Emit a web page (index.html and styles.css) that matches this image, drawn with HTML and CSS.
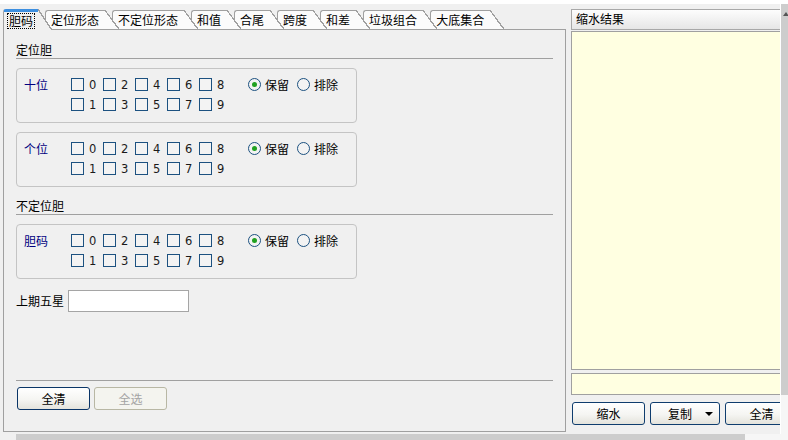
FILE: index.html
```html
<!DOCTYPE html>
<html>
<head>
<meta charset="utf-8">
<link rel="stylesheet" href="styles.css">
</head>
<body>
<div class="window">
  <div class="main">
    <div class="tabctl">
      <div class="tabs">
        <div class="tab active"><span class="focus">胆码</span></div>
        <div class="tab">定位形态</div>
        <div class="tab">不定位形态</div>
        <div class="tab">和值</div>
        <div class="tab">合尾</div>
        <div class="tab">跨度</div>
        <div class="tab">和差</div>
        <div class="tab">垃圾组合</div>
        <div class="tab">大底集合</div>
      </div>
      <div class="panel">
        <div class="section-title">定位胆</div>
        <div class="group">
          <div class="group-label">十位</div>
          <div class="digits">
            <label class="chk"><span class="box"></span>0</label>
            <label class="chk"><span class="box"></span>2</label>
            <label class="chk"><span class="box"></span>4</label>
            <label class="chk"><span class="box"></span>6</label>
            <label class="chk"><span class="box"></span>8</label>
            <label class="chk"><span class="box"></span>1</label>
            <label class="chk"><span class="box"></span>3</label>
            <label class="chk"><span class="box"></span>5</label>
            <label class="chk"><span class="box"></span>7</label>
            <label class="chk"><span class="box"></span>9</label>
          </div>
          <div class="radios">
            <label class="radio"><span class="dot on"></span>保留</label>
            <label class="radio"><span class="dot"></span>排除</label>
          </div>
        </div>
        <div class="group">
          <div class="group-label">个位</div>
          <div class="digits">
            <label class="chk"><span class="box"></span>0</label>
            <label class="chk"><span class="box"></span>2</label>
            <label class="chk"><span class="box"></span>4</label>
            <label class="chk"><span class="box"></span>6</label>
            <label class="chk"><span class="box"></span>8</label>
            <label class="chk"><span class="box"></span>1</label>
            <label class="chk"><span class="box"></span>3</label>
            <label class="chk"><span class="box"></span>5</label>
            <label class="chk"><span class="box"></span>7</label>
            <label class="chk"><span class="box"></span>9</label>
          </div>
          <div class="radios">
            <label class="radio"><span class="dot on"></span>保留</label>
            <label class="radio"><span class="dot"></span>排除</label>
          </div>
        </div>
        <div class="section-title second">不定位胆</div>
        <div class="group">
          <div class="group-label">胆码</div>
          <div class="digits">
            <label class="chk"><span class="box"></span>0</label>
            <label class="chk"><span class="box"></span>2</label>
            <label class="chk"><span class="box"></span>4</label>
            <label class="chk"><span class="box"></span>6</label>
            <label class="chk"><span class="box"></span>8</label>
            <label class="chk"><span class="box"></span>1</label>
            <label class="chk"><span class="box"></span>3</label>
            <label class="chk"><span class="box"></span>5</label>
            <label class="chk"><span class="box"></span>7</label>
            <label class="chk"><span class="box"></span>9</label>
          </div>
          <div class="radios">
            <label class="radio"><span class="dot on"></span>保留</label>
            <label class="radio"><span class="dot"></span>排除</label>
          </div>
        </div>
        <div class="field-row">
          <span class="field-label">上期五星</span>
          <span class="text-input"></span>
        </div>
        <div class="spacer"></div>
        <div class="bottom-bar">
          <div class="btn focused">全清</div>
          <div class="btn disabled">全选</div>
        </div>
      </div>
    </div>
    <div class="result">
      <div class="result-head">缩水结果</div>
      <div class="result-text"></div>
      <div class="result-input"></div>
      <div class="result-buttons">
        <div class="btn">缩水</div>
        <div class="btn split">复制<span class="caret"></span></div>
        <div class="btn wide">全清</div>
      </div>
    </div>
    <div class="vscroll"></div>
  </div>
  <div class="hscroll"></div>
</div>
</body>
</html>
```
FILE: styles.css
```css
* { box-sizing: border-box; }
html, body { margin: 0; padding: 0; }
body {
  width: 788px;
  height: 440px;
  overflow: hidden;
  background: #f0f0f0;
  font-family: "Noto Sans CJK SC", sans-serif;
  font-size: 12px;
  color: #000;
}
.window {
  display: flex;
  flex-direction: column;
  height: 440px;
  border-top: 4px solid #fff;
}
.main {
  display: flex;
  height: 430px;
  flex-shrink: 0;
}

/* ---------- tab control ---------- */
.tabctl {
  margin-left: 3px;
  width: 563px;
  flex-shrink: 0;
  display: flex;
  flex-direction: column;
  padding-top: 5px;
}
.tabs {
  display: flex;
  align-items: flex-end;
  height: 20px;
  position: relative;
  z-index: 1;
}
.tab {
  position: relative;
  height: 19px;
  line-height: 18px;
  padding: 0 6px 0 5px;
  margin-right: 7px;
  border-left: 1px solid #a0a0a0;
  border-top: 1px solid #a0a0a0;
  border-top-left-radius: 3px;
  background: #fbfbfb;
  white-space: nowrap;
}
.tab::after {
  content: "";
  position: absolute;
  top: -1px;
  left: 100%;
  width: 14px;
  height: 19px;
  z-index: 2;
  background: linear-gradient(to top right, #fbfbfb calc(50% - 0.8px), #a0a0a0 calc(50% - 0.8px), #a0a0a0 calc(50% + 0.5px), transparent calc(50% + 0.5px));
}
.tab.active {
  height: 21px;
  margin-bottom: -1px;
  padding: 0 3px;
  line-height: 17px;
  background: #f0f0f0;
  border-top: 3px solid #3d8fe0;
  border-top-left-radius: 3px;
}
.tab.active::after {
  top: -3px;
  height: 21px;
  background: linear-gradient(to top right, #f0f0f0 calc(50% - 0.8px), #a0a0a0 calc(50% - 0.8px), #a0a0a0 calc(50% + 0.5px), transparent calc(50% + 0.5px));
}
.focus {
  display: inline-block;
  border: 1px dotted #000;
  padding: 0 1px;
  line-height: 14px;
}
.panel {
  height: 403px;
  border: 1px solid #a0a0a0;
  background: #f0f0f0;
  display: flex;
  flex-direction: column;
  padding: 12px 12px 21px 12px;
}
.section-title {
  line-height: 16px;
  height: 17px;
  border-bottom: 1px solid #a0a0a0;
}
.section-title.second { margin-top: 11px; }
.group {
  margin-top: 9px;
  width: 341px;
  height: 55px;
  border: 1px solid #c4c4c4;
  border-radius: 4px;
  display: flex;
  align-items: flex-start;
  padding: 9px 0 0 7px;
}
.group-label {
  width: 47px;
  height: 13px;
  line-height: 13px;
  color: #00007f;
}
.digits {
  display: grid;
  grid-template-columns: repeat(5, 32px);
  row-gap: 7px;
}
.chk {
  display: flex;
  align-items: center;
  height: 13px;
  font-family: "DejaVu Sans", sans-serif;
  font-size: 11.5px;
  color: #1a1a1a;
}
.box {
  width: 13px;
  height: 13px;
  border: 1px solid #1c5180;
  margin-right: 5px;
  background: #f3f3f3;
}
.radios {
  display: flex;
  margin-left: 17px;
  gap: 8px;
}
.radio {
  display: flex;
  align-items: center;
  height: 13px;
  gap: 4px;
}
.dot {
  width: 13px;
  height: 13px;
  border-radius: 50%;
  border: 1.3px solid #1c5180;
  background: #f3f3f3;
  display: flex;
  align-items: center;
  justify-content: center;
}
.dot.on::before {
  content: "";
  width: 5px;
  height: 5px;
  border-radius: 50%;
  background: #21a121;
}
.field-row {
  margin-top: 11px;
  display: flex;
  align-items: center;
  gap: 4px;
}
.field-label { line-height: 16px; }
.text-input {
  width: 121px;
  height: 22px;
  background: #fff;
  border: 1px solid #a5a5a5;
}
.spacer { flex: 1; }
.bottom-bar {
  border-top: 1px solid #a0a0a0;
  padding-top: 6px;
  display: flex;
  gap: 4px;
  padding-left: 1px;
}

/* ---------- buttons ---------- */
.btn {
  width: 73px;
  height: 23px;
  flex-shrink: 0;
  border: 1px solid #0f3d6e;
  border-radius: 3px;
  background: linear-gradient(#ffffff, #f5f5f2 55%, #e4e3dc);
  display: flex;
  align-items: center;
  justify-content: center;
  line-height: 16px;
}
.btn.focused { border-color: #0a3567; }
.btn.disabled {
  border-color: #b8b7a4;
  background: #f4f4ef;
  color: #a3a3a3;
}
.btn.split {
  width: 70px;
  position: relative;
  padding-right: 10px;
}
.caret {
  position: absolute;
  right: 6px;
  top: 9px;
  border-left: 4px solid transparent;
  border-right: 4px solid transparent;
  border-top: 4px solid #000;
}

/* ---------- result panel ---------- */
.result {
  margin-left: 5px;
  width: 209px;
  flex-shrink: 0;
  overflow: hidden;
  display: flex;
  flex-direction: column;
  padding-top: 5px;
}
.result-head {
  width: 220px;
  height: 21px;
  flex-shrink: 0;
  border: 1px solid #a8a8a8;
  background: linear-gradient(#fdfdfd, #e6e6e6);
  padding-left: 4px;
  line-height: 18px;
}
.result-text {
  width: 220px;
  height: 339px;
  flex-shrink: 0;
  margin-top: 1px;
  background: #ffffe1;
  border: 1px solid #a0a0a0;
}
.result-input {
  width: 220px;
  height: 22px;
  flex-shrink: 0;
  margin-top: 3px;
  background: #ffffe1;
  border: 1px solid #a0a0a0;
}
.result-buttons {
  margin-top: 7px;
  display: flex;
  gap: 5px;
  padding-left: 1px;
}

/* ---------- scrollbars ---------- */
.vscroll {
  width: 8px;
  flex-shrink: 0;
  border-left: 1px solid #fff;
  background: linear-gradient(#cdcdcd 0 391px, #f6f6f6 391px);
  position: relative;
}
.vscroll::before {
  content: "";
  position: absolute;
  left: 2px;
  top: 8px;
  border-left: 3px solid transparent;
  border-right: 3px solid transparent;
  border-bottom: 4px solid #555;
}
.hscroll {
  height: 6px;
  flex-shrink: 0;
  background: linear-gradient(to right, #f0f0f0 0 16px, #cdcdcd 16px 745px, #f6f6f6 745px);
}
```
